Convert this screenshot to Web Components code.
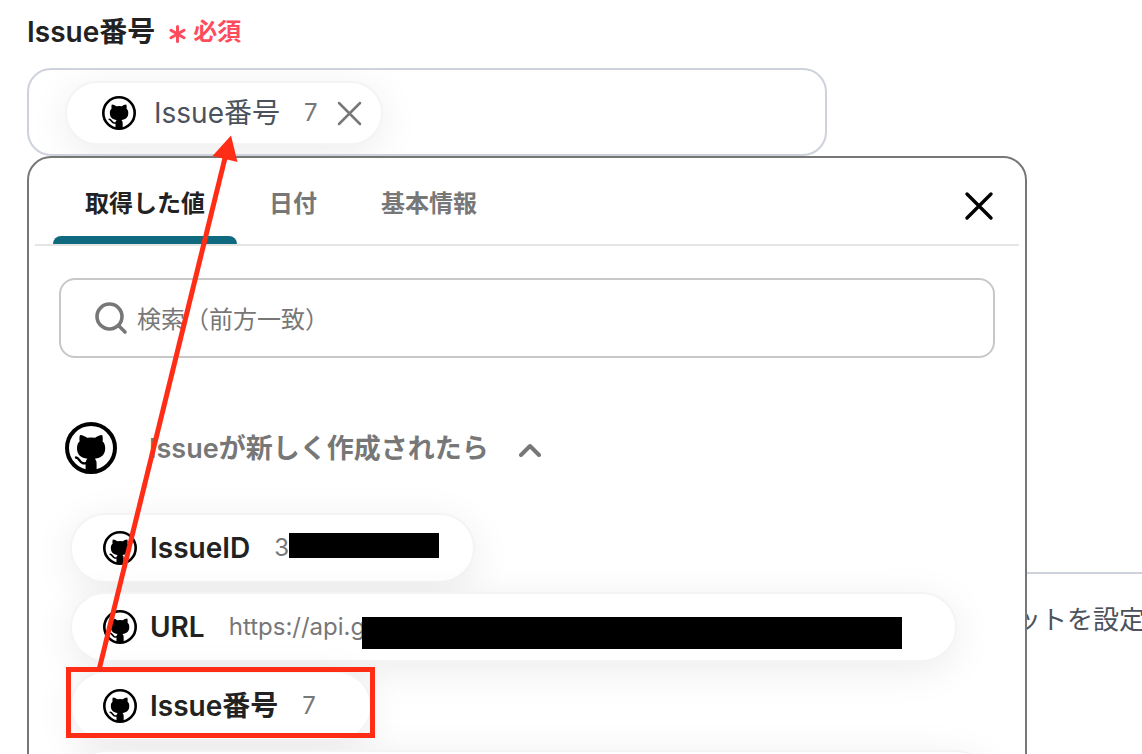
<!DOCTYPE html>
<html lang="ja">
<head>
<meta charset="utf-8">
<title>Issue番号</title>
<style>
  html, body { margin: 0; height: 100%; background: #fff; }
  body { overflow: hidden; font-family: Inter, "Noto Sans CJK JP", sans-serif; color: #222; }
</style>
</head>
<body>
<form-page></form-page>

<template id="t-mark">
  <style>
    :host { display: block; flex: none; width: 34px; height: 34px; }
    svg { display: block; width: 100%; height: 100%; }
  </style>
  <svg viewBox="0 0 52 52" aria-hidden="true">
    <circle cx="26" cy="26" r="24" fill="#fff" stroke="#000" stroke-width="4"/>
    <path d="M20.600 50v-8.500c0-2.300.6-3.500 1.800-4.800C16 36 12 33 12 26c0-3 1-5 2.700-6.700-.4-1.600-.5-4.400.4-6.300 2.600.1 5.100 1.400 7 2.700a26 26 0 0 1 8 0c1.900-1.300 4.400-2.600 7-2.700.9 1.900.8 4.700.4 6.300C39.200 21 40.200 23 40.200 26c0 7-4 10-10.400 10.700 1.200 1.300 1.800 2.500 1.800 4.800V50z"/>
    <path d="M11 35.500c3.500.3 3.500 5.200 7 5.700 1.600.3 3 .1 4.500-.2" fill="none" stroke="#000" stroke-width="2.400" stroke-linecap="round"/>
  </svg>
</template>

<template id="t-chip">
  <style>
    :host {
      display: flex; align-items: center; position: relative; box-sizing: border-box;
      width: fit-content; height: 70px; padding: 0 54px 0 31px;
      border: 2px solid #f4f4f4; border-radius: 35px; background: #fff;
      box-shadow: 0 8px 40px rgba(0, 0, 0, .08); white-space: nowrap;
    }
    .name { margin-left: 13px; font-size: 28px; line-height: 36px; font-weight: 600; color: #222; }
    .value { margin-left: 24px; min-width: var(--value-width, 0); font-size: 24px; line-height: 36px; color: #777; }
    :host([selected]) { height: 64px; padding: 0 19px 0 35px; border-radius: 32px; }
    :host([selected]) .name { margin-left: 18px; font-weight: 400; color: #4b525c; }
  </style>
  <git-mark></git-mark>
  <span class="name"><slot></slot></span>
  <span class="value"><slot name="value"></slot></span>
  <slot name="over"></slot>
</template>

<template id="t-mask">
  <style>:host { display: block; position: absolute; background: #000; }</style>
</template>

<template id="t-field">
  <style>
    :host { display: block; max-width: 800px; }
    .label { display: flex; align-items: center; gap: 14px; height: 38px; font-size: 28px; font-weight: 600; line-height: 36px; }
    .required { display: flex; align-items: center; gap: 7px; font-size: 24px; font-weight: 600; color: #ff4b5c; }
    .required svg { width: 17px; height: 18px; margin-top: 4px; }
    .box { display: flex; align-items: center; box-sizing: border-box; height: 88px; margin-top: 17px; padding: 2px 36px 0; border: 2px solid #ced2da; border-radius: 24px; overflow: hidden; }
    button { display: block; margin: 0 0 0 19px; padding: 0; border: 0; background: none; }
    button svg { display: block; width: 25px; height: 25px; }
  </style>
  <div class="label"><span><slot name="label"></slot></span>
    <span class="required"><svg viewBox="0 0 17 18" fill="none" stroke="#ff4b5c" stroke-width="3" stroke-linecap="round" aria-hidden="true"><path d="M8.500 1.500v15M2 5.300l13 7.400M15 5.300l-13 7.400"/></svg>必須</span>
  </div>
  <div class="box">
    <value-chip selected>Issue番号<span slot="value">7</span>
      <button slot="over" type="button" aria-label="削除"><svg viewBox="0 0 25 25" fill="none" stroke="#777" stroke-width="2.500" stroke-linecap="round"><path d="M2 2l21 21M23 2L2 23"/></svg></button>
    </value-chip>
  </div>
</template>

<template id="t-tabs">
  <style>
    :host { display: flex; align-items: flex-start; height: 86px; margin: 0 6px; border-bottom: 2px solid #e5e5e5; }
    button { margin: 0; border: 0; background: none; font: inherit; }
    .tab { position: relative; height: 86px; padding: 8px 32px; font-size: 24px; font-weight: 600; color: #777; }
    .tabs { display: flex; margin-left: 18px; }
    [aria-selected="true"] { color: #222; }
    [aria-selected="true"]::after { content: ""; position: absolute; left: 0; right: 0; bottom: 0; height: 8px; border-radius: 8px 8px 0 0; background: #0f6a80; }
    .close { margin: 33px 25px 0 auto; padding: 0; }
    .close svg { display: block; width: 30px; height: 30px; }
  </style>
  <div class="tabs" role="tablist">
    <button class="tab" type="button" role="tab" aria-selected="true">取得した値</button>
    <button class="tab" type="button" role="tab" aria-selected="false">日付</button>
    <button class="tab" type="button" role="tab" aria-selected="false">基本情報</button>
  </div>
  <button class="close" type="button" aria-label="閉じる"><svg viewBox="0 0 30 30" fill="none" stroke="#000" stroke-width="3.400" stroke-linecap="round"><path d="M3 3l24 24M27 3L3 27"/></svg></button>
</template>

<template id="t-search">
  <style>
    :host { display: flex; align-items: center; box-sizing: border-box; height: 80px; padding: 0 34px; gap: 8px; border: 2px solid #c8c8c8; border-radius: 16px; }
    svg { flex: none; width: 34px; height: 34px; }
    input { flex: 1; min-width: 0; height: 40px; padding: 2px 0 0; box-sizing: border-box; border: 0; outline: 0; background: none; font: inherit; font-size: 24px; color: #222; }
    input::placeholder { color: #777; opacity: 1; }
  </style>
  <svg viewBox="0 0 34 34" fill="none" stroke="#777" stroke-width="3.600" stroke-linecap="round" aria-hidden="true"><circle cx="14.500" cy="15.500" r="12.500"/><path d="M24 25l6 6"/></svg>
  <input type="text" placeholder="検索（前方一致）" aria-label="検索（前方一致）">
</template>

<template id="t-group">
  <style>
    :host { display: block; }
    .head { display: flex; align-items: center; width: fit-content; height: 52px; margin: 0 0 0 6px; padding: 0; border: 0; background: none; font: inherit; font-size: 27px; font-weight: 600; color: #777; }
    .head git-mark { width: 52px; height: 52px; }
    .head span { margin: 0 30px 0 32px; padding-bottom: 4px; }
    .head svg { width: 22px; height: 14px; margin-top: 4px; }
    .list { display: grid; gap: 9px; margin: 39px 0 0 11px; }
  </style>
  <button class="head" type="button" aria-expanded="true">
    <git-mark></git-mark><span><slot name="title"></slot></span>
    <svg viewBox="0 0 22 14" fill="none" stroke="#777" stroke-width="4" stroke-linecap="round" stroke-linejoin="round" aria-hidden="true"><path d="M2 12l9-9 9 9"/></svg>
  </button>
  <div class="list"><slot></slot></div>
</template>

<template id="t-panel">
  <style>
    :host { display: block; box-sizing: border-box; border: 2px solid #777; border-radius: 24px; background: #fff; }
    .body { padding: 32px 30px; }
    value-group { margin-top: 64px; }
    .id { --value-width: 145px; }
    .id mask-bar { left: 217px; top: 18px; width: 150px; height: 25px; }
    .url { --value-width: 672px; }
    .url mask-bar { left: 290px; top: 23px; width: 540px; height: 32px; }
    .more { width: 920px; }
  </style>
  <panel-tabs></panel-tabs>
  <div class="body">
    <search-box></search-box>
    <value-group>
      <span slot="title">Issueが新しく作成されたら</span>
      <value-chip class="id">IssueID<span slot="value">3</span><mask-bar slot="over"></mask-bar></value-chip>
      <value-chip class="url">URL<span slot="value">https://api.g</span><mask-bar slot="over"></mask-bar></value-chip>
      <value-chip>Issue番号<span slot="value">7</span></value-chip>
      <value-chip class="more"></value-chip>
    </value-group>
  </div>
</template>

<template id="t-arrow">
  <style>
    :host { display: block; position: absolute; left: 0; top: 0; pointer-events: none; }
    svg { display: block; }
  </style>
  <svg width="400" height="754" viewBox="0 0 400 754" aria-hidden="true">
    <path d="M68.500 669.500h304v66h-304z" fill="none" stroke="#ff2d16" stroke-width="5"/>
    <path d="M99.500 668L225 158" stroke="#ff2d16" stroke-width="5"/>
    <path d="M231 135.500l6.500 26.500-25-6z" fill="#ff2d16"/>
  </svg>
</template>

<template id="t-page">
  <style>
    :host { display: block; position: relative; box-sizing: border-box; height: 100vh; padding: 13px 0 0 27px; overflow: hidden; }
    value-panel { position: absolute; left: 27px; top: 156px; width: calc(100% - 54px); max-width: 1000px; }
    .next { margin: 416px 0 0; padding: 28px 0 0 988px; border-top: 2px solid #ced2da; font-size: 26px; line-height: 36px; color: #4b525c; white-space: nowrap; }
  </style>
  <form-field><span slot="label">Issue番号</span></form-field>
  <p class="next">ットを設定</p>
  <value-panel></value-panel>
  <pointer-arrow></pointer-arrow>
</template>

<script>
  const define = (name, id) => customElements.define(name, class extends HTMLElement {
    constructor() {
      super();
      this.attachShadow({ mode: "open" }).append(document.getElementById(id).content.cloneNode(true));
    }
  });
  define("git-mark", "t-mark");
  define("mask-bar", "t-mask");
  define("value-chip", "t-chip");
  define("form-field", "t-field");
  define("panel-tabs", "t-tabs");
  define("search-box", "t-search");
  define("value-group", "t-group");
  define("value-panel", "t-panel");
  define("pointer-arrow", "t-arrow");
  define("form-page", "t-page");
</script>
</body>
</html>
